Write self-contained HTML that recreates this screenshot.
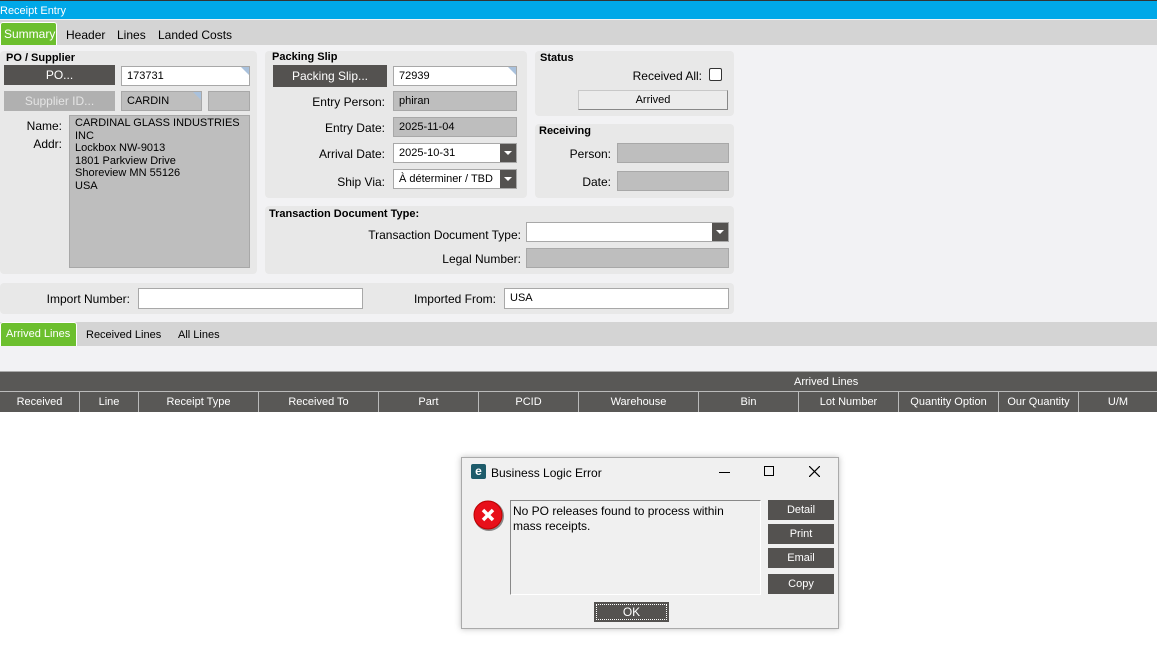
<!DOCTYPE html>
<html><head><meta charset="utf-8"><style>
*{box-sizing:border-box;margin:0;padding:0}
body{width:1157px;height:655px;background:#f2f2f4;font-family:"Liberation Sans",Arial,sans-serif;font-size:12px;color:#000;position:relative;overflow:hidden}
.a{position:absolute}
.panel{position:absolute;background:#e8e8e8;border-radius:4px}
.h{position:absolute;font-weight:bold;font-size:11px}
.btn{position:absolute;background:#545250;color:#fff;text-align:center;line-height:20px;font-size:12px}
.in{position:absolute;background:#fff;border:1px solid #a8a8a8;padding-left:5px;line-height:18px;font-size:11px}
.ro{position:absolute;background:#bebebe;border:1px solid #a8a8a8;padding-left:5px;line-height:18px;font-size:11px}
.lbl{position:absolute;text-align:right;font-size:12px}
.dd{position:absolute;right:0;top:0;width:16px;height:100%;background:#545250}
.dd:after{content:"";position:absolute;left:4px;top:7px;border-left:4px solid transparent;border-right:4px solid transparent;border-top:4px solid #fff}
.corner{position:absolute;right:0;top:0;border-left:8px solid transparent;border-top:8px solid #a9c1dc}
.col{position:absolute;top:392px;height:20px;line-height:20px;color:#fff;text-align:center;font-size:11px;border-right:1px solid #bbb}
.mb{position:absolute;left:768px;width:66px;height:20px;background:#545250;color:#fff;text-align:center;line-height:20px;font-size:11px}
</style></head><body>
<div class="a" style="left:0;top:0;width:1157px;height:19px;background:#00a8e8;color:#fff;font-size:11px;line-height:20px;border-top:1px solid #333">Receipt Entry</div>
<div class="a" style="left:0;top:20px;width:1157px;height:25px;background:#d4d4d4"></div>
<div class="a" style="left:0;top:22px;width:57px;height:23px;background:#6cbf2e;border:1px solid #fff;border-bottom:none;border-radius:3px 3px 0 0;color:#fff;line-height:22px;padding-left:3px">Summary</div>
<div class="a" style="left:66px;top:28px">Header</div>
<div class="a" style="left:117px;top:28px">Lines</div>
<div class="a" style="left:158px;top:28px">Landed Costs</div>

<div class="panel" style="left:0;top:51px;width:257px;height:223px"></div>
<div class="h" style="left:6px;top:52px">PO / Supplier</div>
<div class="btn" style="left:4px;top:65px;width:111px">PO...</div>
<div class="in" style="left:121px;top:66px;width:129px;height:20px">173731<div class="corner"></div></div>
<div class="btn" style="left:4px;top:91px;width:111px;background:#b0b0b0;color:#e4e4e4">Supplier ID...</div>
<div class="ro" style="left:121px;top:91px;width:81px;height:20px">CARDIN<div class="corner"></div></div>
<div class="ro" style="left:208px;top:91px;width:42px;height:20px"></div>
<div class="lbl" style="left:20px;top:119px;width:42px">Name:</div>
<div class="lbl" style="left:20px;top:137px;width:42px">Addr:</div>
<div class="ro" style="left:69px;top:115px;width:181px;height:153px;line-height:12.5px;padding-top:1px;font-size:11px">CARDINAL GLASS INDUSTRIES<br>INC<br>Lockbox NW-9013<br>1801 Parkview Drive<br>Shoreview MN 55126<br>USA</div>

<div class="panel" style="left:265px;top:51px;width:262px;height:147px"></div>
<div class="h" style="left:272px;top:51px">Packing Slip</div>
<div class="btn" style="left:273px;top:65px;width:114px;height:22px;line-height:22px">Packing Slip...</div>
<div class="in" style="left:393px;top:66px;width:124px;height:20px">72939<div class="corner"></div></div>
<div class="lbl" style="left:270px;top:95px;width:115px">Entry Person:</div>
<div class="ro" style="left:393px;top:91px;width:124px;height:20px">phiran</div>
<div class="lbl" style="left:270px;top:121px;width:115px">Entry Date:</div>
<div class="ro" style="left:393px;top:117px;width:124px;height:20px">2025-11-04</div>
<div class="lbl" style="left:270px;top:147px;width:115px">Arrival Date:</div>
<div class="in" style="left:393px;top:143px;width:124px;height:20px">2025-10-31<div class="dd"></div></div>
<div class="lbl" style="left:270px;top:175px;width:115px">Ship Via:</div>
<div class="in" style="left:393px;top:169px;width:124px;height:20px">À déterminer / TBD<div class="dd"></div></div>

<div class="panel" style="left:535px;top:51px;width:199px;height:65px"></div>
<div class="h" style="left:540px;top:52px">Status</div>
<div class="lbl" style="left:600px;top:69px;width:102px">Received All:</div>
<div class="a" style="left:709px;top:68px;width:13px;height:13px;border:1px solid #333;border-radius:2px;background:#fff"></div>
<div class="a" style="left:578px;top:90px;width:150px;height:20px;background:#ececec;border:1px solid #c8c8c8;border-right-color:#888;border-bottom-color:#888;text-align:center;line-height:18px;font-size:11px">Arrived</div>

<div class="panel" style="left:535px;top:124px;width:199px;height:74px"></div>
<div class="h" style="left:539px;top:125px">Receiving</div>
<div class="lbl" style="left:540px;top:147px;width:71px">Person:</div>
<div class="ro" style="left:617px;top:143px;width:112px;height:20px"></div>
<div class="lbl" style="left:540px;top:175px;width:71px">Date:</div>
<div class="ro" style="left:617px;top:171px;width:112px;height:20px"></div>

<div class="panel" style="left:265px;top:206px;width:469px;height:68px"></div>
<div class="h" style="left:269px;top:208px">Transaction Document Type:</div>
<div class="lbl" style="left:300px;top:228px;width:221px">Transaction Document Type:</div>
<div class="in" style="left:526px;top:222px;width:203px;height:20px"><div class="dd"></div></div>
<div class="lbl" style="left:300px;top:252px;width:221px">Legal Number:</div>
<div class="ro" style="left:526px;top:248px;width:203px;height:20px"></div>

<div class="panel" style="left:0;top:283px;width:734px;height:31px"></div>
<div class="lbl" style="left:20px;top:292px;width:110px">Import Number:</div>
<div class="in" style="left:138px;top:288px;width:225px;height:21px"></div>
<div class="lbl" style="left:380px;top:292px;width:116px">Imported From:</div>
<div class="in" style="left:504px;top:288px;width:225px;height:21px">USA</div>

<div class="a" style="left:0;top:322px;width:1157px;height:24px;background:#d4d4d4"></div>
<div class="a" style="left:0;top:322px;width:77px;height:24px;background:#6cbf2e;border:1px solid #fff;border-bottom:none;border-radius:3px 3px 0 0;color:#fff;line-height:22px;padding-left:5px;font-size:11px">Arrived Lines</div>
<div class="a" style="left:86px;top:329px;font-size:11px">Received Lines</div>
<div class="a" style="left:178px;top:329px;font-size:11px">All Lines</div>

<div class="a" style="left:0;top:371px;width:1157px;height:41px;background:#595856;border-top:1px solid #aaa"></div>
<div class="a" style="left:794px;top:376px;color:#fff;font-size:11px">Arrived Lines</div>
<div class="a" style="left:0;top:391px;width:1157px;height:1px;background:#bbb"></div>
<div class="col" style="left:0;width:80px">Received</div>
<div class="col" style="left:80px;width:59px">Line</div>
<div class="col" style="left:139px;width:120px">Receipt Type</div>
<div class="col" style="left:259px;width:120px">Received To</div>
<div class="col" style="left:379px;width:100px">Part</div>
<div class="col" style="left:479px;width:100px">PCID</div>
<div class="col" style="left:579px;width:120px">Warehouse</div>
<div class="col" style="left:699px;width:100px">Bin</div>
<div class="col" style="left:799px;width:100px">Lot Number</div>
<div class="col" style="left:899px;width:100px">Quantity Option</div>
<div class="col" style="left:999px;width:80px">Our Quantity</div>
<div class="col" style="left:1079px;width:78px;border-right:none">U/M</div>
<div class="a" style="left:0;top:412px;width:1157px;height:243px;background:#fff"></div>

<div class="a" style="left:461px;top:457px;width:378px;height:172px;background:#f0f0f0;border:1px solid #aaa;box-shadow:0 0 6px rgba(0,0,0,.25)"></div>
<div class="a" style="left:471px;top:464px;width:15px;height:15px;background:#1d5b6a;border-radius:2px;color:#fff;font-weight:bold;font-size:12px;text-align:center;line-height:14px">e</div>
<div class="a" style="left:491px;top:466px;font-size:12px">Business Logic Error</div>
<div class="a" style="left:719px;top:472px;width:11px;height:1px;background:#000"></div>
<div class="a" style="left:764px;top:466px;width:10px;height:10px;border:1px solid #000"></div>
<svg class="a" style="left:809px;top:466px" width="11" height="11"><path d="M0 0L11 11M11 0L0 11" stroke="#000" stroke-width="1.2"/></svg>
<svg class="a" style="left:473px;top:500px" width="34" height="34"><circle cx="16" cy="16" r="15" fill="#888"/><circle cx="15" cy="15" r="14" fill="#e8101a" stroke="#b00" /><path d="M10 10L20 20M20 10L10 20" stroke="#fff" stroke-width="3.5"/></svg>
<div class="a" style="left:510px;top:500px;width:251px;height:95px;border:1px solid #888;border-right-color:#fff;border-bottom-color:#fff;padding:3px 20px 3px 2px;font-size:12px;line-height:15px">No PO releases found to process within mass receipts.</div>
<div class="mb" style="top:500px">Detail</div>
<div class="mb" style="top:524px">Print</div>
<div class="mb" style="top:548px">Email</div>
<div class="mb" style="top:574px">Copy</div>
<div class="a" style="left:594px;top:602px;width:75px;height:20px;background:#545250;color:#fff;text-align:center;line-height:20px;font-size:12px;outline:1px dotted #fff;outline-offset:-3px">OK</div>
</body></html>
